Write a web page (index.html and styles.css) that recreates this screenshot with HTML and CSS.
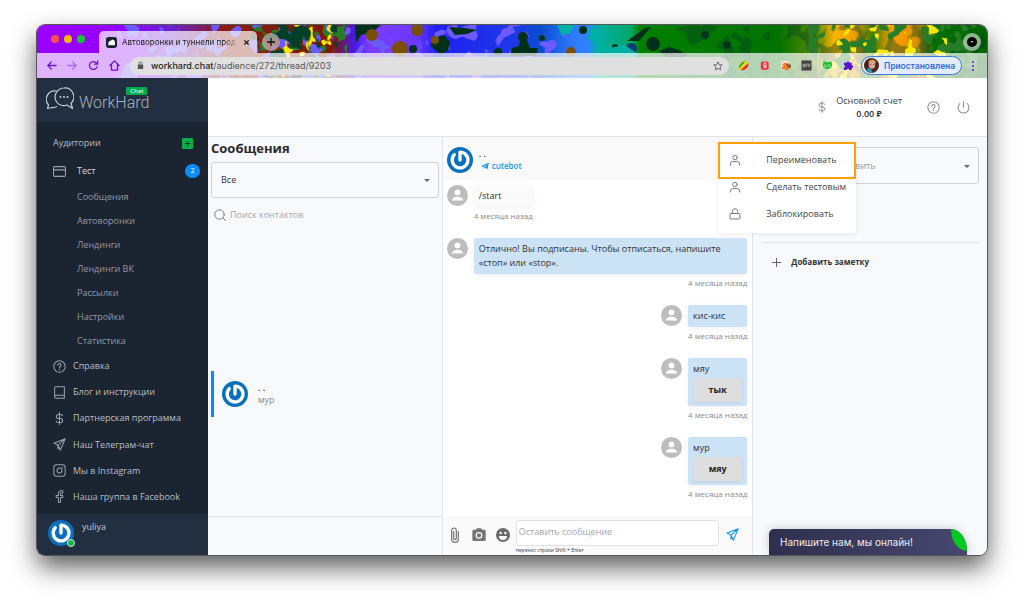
FILE: index.html
```
<!DOCTYPE html>
<html lang="ru">
<head>
<meta charset="utf-8">
<title>Автоворонки и туннели продаж</title>
<meta name="viewport" content="width=device-width, initial-scale=1">
<link rel="stylesheet" href="styles.css">
</head>
<body>
<svg class="defs" aria-hidden="true">
  <defs>
    <symbol id="i-user" viewBox="0 0 24 24"><circle cx="12" cy="7" r="4.500"/><path d="M3 22v-2a5 5 0 0 1 5-5h8a5 5 0 0 1 5 5v2"/></symbol>
    <symbol id="i-lock" viewBox="0 0 24 24"><rect x="2" y="11" width="20" height="11" rx="2"/><path d="M6.500 11V7a5.500 5.500 0 0 1 11 0v4"/></symbol>
    <symbol id="i-help" viewBox="0 0 24 24"><circle cx="12" cy="12" r="10.500"/><path d="M9 9.500a3 3 0 1 1 4.500 2.600c-1 .6-1.500 1-1.500 2.200M12 17v.8"/></symbol>
    <symbol id="i-plane" viewBox="0 0 24 24"><path d="M22.500 1.500 1.500 9.500l7.500 4 4.500 9zM9 13.500l13-12M9 13.500V20l3-3"/></symbol>
    <symbol id="i-dollar" viewBox="0 0 24 24"><path d="M12 1v22M17.500 6.500C17 5 15.500 4.500 14 4.500h-4a3.700 3.700 0 0 0 0 7.500h4a3.700 3.700 0 0 1 0 7.500h-4.500C8 19.500 6.500 19 6 17"/></symbol>
    <symbol id="i-person" viewBox="0 0 24 24"><circle cx="12" cy="12" r="12" fill="#bdbdbd"/><circle cx="12" cy="8.500" r="3.300" fill="#fff"/><path d="M5.500 17.600c0-2.700 3.400-4.200 6.500-4.200s6.500 1.500 6.500 4.200z" fill="#fff"/></symbol>
    <symbol id="i-gravatar" viewBox="0 0 26 26"><circle cx="13" cy="13" r="13" fill="#0a70bc"/><path d="M7.300 7.600A7.900 7.900 0 1 0 13 5.100v8" fill="none" stroke="#fff" stroke-width="3.300" stroke-linecap="round" stroke-linejoin="round"/><path d="M9.600 11.500a3.800 3.800 0 1 0 6.800 0" fill="none" stroke="#0a70bc" stroke-width="1.200"/></symbol>
  </defs>
</svg>

<div class="window">
  <header class="chrome">
    <svg class="chrome-art" viewBox="0 0 950 53" preserveAspectRatio="none" aria-hidden="true">
      <defs>
        <linearGradient id="sky" x1="0" x2="1">
          <stop offset="0" stop-color="#9a00ff"/><stop offset=".09" stop-color="#9400ff"/>
          <stop offset=".14" stop-color="#6a20d0"/><stop offset=".2" stop-color="#8a1c10"/>
          <stop offset=".31" stop-color="#7c1a00"/><stop offset=".335" stop-color="#4a18f0"/>
          <stop offset=".35" stop-color="#7b3cff"/><stop offset=".4" stop-color="#6b38ff"/>
          <stop offset=".42" stop-color="#2020f0"/><stop offset=".5" stop-color="#1c38e8"/>
          <stop offset=".53" stop-color="#0a4cd0"/><stop offset=".565" stop-color="#2f7bff"/>
          <stop offset=".58" stop-color="#2f80ff"/><stop offset=".59" stop-color="#00b0a4"/>
          <stop offset=".625" stop-color="#04a868"/><stop offset=".635" stop-color="#008000"/>
          <stop offset=".78" stop-color="#007200"/><stop offset=".82" stop-color="#5c8a00"/>
          <stop offset=".84" stop-color="#ffb400"/><stop offset=".86" stop-color="#f0a000"/><stop offset=".88" stop-color="#3c7c00"/>
          <stop offset=".9" stop-color="#ffa000"/><stop offset=".925" stop-color="#e09000"/><stop offset=".945" stop-color="#007000"/>
          <stop offset="1" stop-color="#006400"/>
        </linearGradient>
        <filter id="camo-a" x="0" y="0" width="1" height="1"><feTurbulence type="fractalNoise" baseFrequency=".06" numOctaves="2" seed="4"/><feColorMatrix values="0 0 0 0 0  0 0 0 0 .05  0 0 0 0 .02  18 0 0 0 -9.300"/></filter>
        <filter id="camo-b" x="0" y="0" width="1" height="1"><feTurbulence type="fractalNoise" baseFrequency=".07" numOctaves="2" seed="11"/><feColorMatrix values="0 0 0 0 .15  0 0 0 0 .1  0 0 0 0 1  0 18 0 0 -10"/></filter>
        <filter id="camo-c" x="0" y="0" width="1" height="1"><feTurbulence type="fractalNoise" baseFrequency=".09" numOctaves="2" seed="21"/><feColorMatrix values="0 0 0 0 .95  0 0 0 0 .8  0 0 0 0 0  0 0 20 0 -12.200"/></filter>
        <filter id="camo-d" x="0" y="0" width="1" height="1"><feTurbulence type="fractalNoise" baseFrequency=".07" numOctaves="2" seed="32"/><feColorMatrix values="0 0 0 0 .02  0 0 0 0 .2  0 0 0 0 .02  18 0 0 0 -9.600"/></filter>
      </defs>
      <rect width="950" height="53" fill="url(#sky)"/>
      <rect x="215" width="95" height="53" filter="url(#camo-d)"/>
      <rect x="80" width="240" height="53" filter="url(#camo-b)"/>
      <rect x="240" width="70" height="53" filter="url(#camo-c)"/>
      <rect x="215" width="85" height="53" filter="url(#camo-a)"/>
      <rect x="320" width="210" height="53" filter="url(#camo-b)"/>
      <g fill="#003018">
        <path d="M318 0h26l-8 7-12 3-5 8zM395 14l12-4 6 7-2 9-8 3-9-8zM412 2l16 1 12 2-10 4-12 1z"/>
        <circle cx="376" cy="24" r="4"/><circle cx="461" cy="27" r="4"/><circle cx="486" cy="12" r="5"/><path d="M483 15h7l3 8h8l-2 8h-26l2-8 7-2z"/>
        <circle cx="505" cy="13" r="3"/><circle cx="546" cy="5" r="4"/><circle cx="578" cy="22" r="3"/><circle cx="594" cy="24" r="6" fill="#073c78"/>
        <circle cx="616" cy="19" r="7"/><path d="M590 16l18-13 6-1-12 14zM622 26l10-4 10 3 10 6-22 2z"/><circle cx="690" cy="20" r="4"/><circle cx="668" cy="10" r="4"/>
      </g>
      <g fill="#7a5000"><circle cx="335" cy="10" r="6"/><circle cx="380" cy="5" r="6"/><circle cx="363" cy="24" r="8"/><circle cx="534" cy="27" r="5"/><circle cx="398" cy="15" r="4"/></g>
      <g fill="#00b0a4"><path d="M520 0h18l-5 8-8 3zM552 3l10 1 5 12-4 4-12-6zM566 24l22-4 14 10-20 6z"/></g>
      <rect x="640" width="310" height="53" filter="url(#camo-a)" opacity=".4"/>
      <rect x="770" width="170" height="53" filter="url(#camo-d)"/>
      <rect x="790" width="120" height="53" filter="url(#camo-c)"/>
    </svg>
    <div class="tabstrip">
      <div class="lights"><i class="red"></i><i class="amber"></i><i class="green"></i></div>
      <div class="tab">
        <svg class="ico11" viewBox="0 0 12 12"><rect width="12" height="12" rx="3" fill="#15242c"/><path d="M2.500 9V6.500l1-2 1.500-.3L7 2.800l2 .7.800 2V9z" fill="#fff"/></svg>
        <span class="tab-title">Автоворонки и туннели прод</span>
        <button class="plain" aria-label="Закрыть вкладку"><svg class="ico7" viewBox="0 0 8 8"><path d="M1.500 1.500l5 5M6.500 1.500l-5 5" stroke="#111" stroke-width="1.400"/></svg></button>
      </div>
      <button class="round-btn" aria-label="Новая вкладка"><svg class="ico10" viewBox="0 0 10 10"><path d="M5 1v8M1 5h8" stroke="#111" stroke-width="1.300"/></svg></button>
      <button class="round-btn tab-search" aria-label="Поиск вкладок"><svg class="ico10" viewBox="0 0 10 10"><circle cx="5" cy="5" r="5"/><path d="M3.500 4h3L5 6z" fill="#ccc"/></svg></button>
    </div>
    <div class="toolbar">
      <div class="nav-btns">
        <button class="plain" aria-label="Назад"><svg class="ico11 line" viewBox="0 0 12 12"><path d="M11 6H2M6 2 2 6l4 4"/></svg></button>
        <button class="plain dim" aria-label="Вперёд"><svg class="ico11 line" viewBox="0 0 12 12"><path d="M1 6h9M6 2l4 4-4 4"/></svg></button>
        <button class="plain" aria-label="Обновить"><svg class="ico11 line" viewBox="0 0 12 12"><path d="M10 7.200A4.300 4.300 0 1 1 9.300 3.400M10.500 1v3.600H7"/></svg></button>
        <button class="plain" aria-label="Домой"><svg class="ico11 line" viewBox="0 0 12 12"><path d="M1 6l5-5 5 5M2.700 5v6h6.600V5"/></svg></button>
      </div>
      <div class="address">
        <svg class="ico9" viewBox="0 0 10 10"><rect x="2" y="4" width="6" height="5" rx=".6" fill="#555"/><path d="M3.300 4V2.800a1.700 1.700 0 0 1 3.400 0V4" fill="none" stroke="#555"/></svg>
        <span class="url"><b>workhard.chat</b>/audience/272/thread/9203</span>
        <svg class="ico10 star" viewBox="0 0 12 12"><path d="M6 1l1.500 3.400 3.600.3-2.700 2.400.8 3.600L6 8.800l-3.200 1.900.8-3.600L.9 4.700l3.600-.3z"/></svg>
      </div>
      <div class="exts">
        <svg class="ico11" viewBox="0 0 12 12"><ellipse cx="6" cy="6" rx="6" ry="4.500" transform="rotate(-45 6 6)" fill="#fbd21c"/><path d="M1.200 9.500C.5 6 4 1.500 8 1.300z" fill="#18a84c"/><path d="M3 10.800C7 12.300 12 8 11 3.500z" fill="#e3262d"/></svg>
        <svg class="ico11" viewBox="0 0 12 12"><rect x="2" y="1.500" width="8.500" height="9" rx="2" fill="#f02c3c"/><path d="M7.500 9V3.300H6.200a1.500 1.500 0 0 0 0 3h1.300M6.500 6.300 5 9" stroke="#fff" fill="none"/></svg>
        <svg class="ico11" viewBox="0 0 12 12"><path d="M1 1h7l3 3v7H1z" fill="#f4eee8"/><path d="M2 2h1v1H2zM4 3h2v1H4zM2 5h2v1H2zM2 8h2v2H2z" fill="#e04020"/><circle cx="7.500" cy="7" r="4" fill="#e8842c"/><path d="M7.500 7l4-2.500v4z" fill="#444"/><circle cx="8" cy="5" r=".7"/></svg>
        <svg class="ico11" viewBox="0 0 12 12"><rect x=".5" y=".5" width="11" height="11" fill="#444"/><path d="M2.300 4.500h1.600v3H2.300zM5.500 7.800V4.500h1.700M5.500 6.200h1.500M8.500 7.800V4.500h1.700M8.500 6.200H10" stroke="#eee" stroke-width=".6" fill="none"/></svg>
        <svg class="ico11" viewBox="0 0 12 12"><path d="M2 1l2 1.500h4L10 1l.8 3A5 4.500 0 1 1 1.200 4z" fill="#12c02c"/><path d="M2.500 4.500h7v3h-7z" fill="#7ef08c"/><path d="M4 5.200h1.400v1.500H4zM6.600 6.700V5.200L8 6.700V5.200" fill="none" stroke="#0a7a1c" stroke-width=".5"/></svg>
        <svg class="ico11" viewBox="0 0 12 12"><path d="M1 3h3a1.500 1.500 0 1 1 3 0h2.500v2.800a1.500 1.500 0 1 1 0 3V11H6.800a1.400 1.400 0 0 0-2.800 0H1V8.300a1.400 1.400 0 0 0 0-2.800z" fill="#5b10d8"/></svg>
      </div>
      <button class="profile">
        <svg class="ico15" viewBox="0 0 16 16"><circle cx="8" cy="8" r="8" fill="#4a2418"/><ellipse cx="8.500" cy="7" rx="3.500" ry="4.500" fill="#dcaa98"/><path d="M4.500 4.500c1.500-4 7-4 8.500 0l-1 .5c-2-1.500-4-1.500-6 0z" fill="#c8a060"/><path d="M2.500 12.500c2-3 4-2 5.500 0l1 3.500a8 8 0 0 1-6.500-3.500z" fill="#1aa0b8"/><path d="M6 6.800h2M9.500 6.800h2" stroke="#7a4a50" stroke-width=".8"/></svg>
        <span>Приостановлена</span>
      </button>
      <button class="plain kebab" aria-label="Меню"><i></i><i></i><i></i></button>
    </div>
  </header>

  <div class="app">
    <aside class="sidebar">
      <a class="brand" href="#">
        <svg class="brand-mark" viewBox="0 0 28 23"><path d="M11 19.500A8 8 0 0 1 6 20.500L1.500 21.500l1-3.500A8.500 8.500 0 0 1 10.500 4"/><path d="M18 1a9 9 0 0 0-7 14.500c1.800 2.400 6 4 10 2.500L26.500 21.500 25 16.500A9 9 0 0 0 18 1z"/><g class="dots"><circle cx="14.500" cy="10" r="1"/><circle cx="18" cy="10" r="1"/><circle cx="21.500" cy="10" r="1"/></g></svg>
        <span class="brand-name">WorkHard<span class="brand-badge">Chat</span></span>
      </a>
      <nav class="nav">
        <div class="nav-head"><span>Аудитории</span><button class="add" aria-label="Добавить аудиторию"><svg class="ico7" viewBox="0 0 8 8"><path d="M4 1v6M1 4h6" stroke="#12301c" stroke-width="1.400"/></svg></button></div>
        <a class="nav-head current" href="#"><svg class="ico13 line" viewBox="0 0 24 24"><rect x="1" y="3" width="22" height="18" rx="2"/><path d="M1 9h22"/></svg><span class="grow">Тест</span><span class="count">2</span></a>
        <ul class="sub">
          <li><a href="#">Сообщения</a></li><li><a href="#">Автоворонки</a></li><li><a href="#">Лендинги</a></li><li><a href="#">Лендинги ВК</a></li><li><a href="#">Рассылки</a></li><li><a href="#">Настройки</a></li><li><a href="#">Статистика</a></li>
        </ul>
        <ul class="links">
          <li><a href="#"><svg class="ico13 line"><use href="#i-help"/></svg>Справка</a></li>
          <li><a href="#"><svg class="ico13 line" viewBox="0 0 24 24"><path d="M21 17V1.500H5.500A2.500 2.500 0 0 0 3 4v16a2.500 2.500 0 0 0 2.500 2.500H21V17H5.500A2.500 2.500 0 0 0 3 19.500"/></svg>Блог и инструкции</a></li>
          <li><a href="#"><svg class="ico13 line"><use href="#i-dollar"/></svg>Партнерская программа</a></li>
          <li><a href="#"><svg class="ico13 line"><use href="#i-plane"/></svg>Наш Телеграм-чат</a></li>
          <li><a href="#"><svg class="ico13 line" viewBox="0 0 24 24"><rect x="1.500" y="1.500" width="21" height="21" rx="5"/><circle cx="12" cy="12" r="4.500"/><path d="M17.500 6v1"/></svg>Мы в Instagram</a></li>
          <li><a href="#"><svg class="ico13 line" viewBox="0 0 24 24"><path d="M18 1.500h-3a5 5 0 0 0-5 5V10H6v4h4v8.500h4V14h4V10h-4V7a1.500 1.500 0 0 1 1.500-1.500H18z"/></svg>Наша группа в Facebook</a></li>
        </ul>
      </nav>
      <div class="me"><span class="me-pic"><svg class="ico26"><use href="#i-gravatar"/></svg><i class="online"></i></span><span>yuliya</span></div>
    </aside>

    <div class="main">
      <div class="topbar">
        <svg class="ico12 line"><use href="#i-dollar"/></svg>
        <div class="balance"><span>Основной счет</span><b>0.00 ₽</b></div>
        <button class="plain" aria-label="Помощь"><svg class="ico13 line"><use href="#i-help"/></svg></button>
        <button class="plain" aria-label="Выйти"><svg class="ico13 line" viewBox="0 0 24 24"><path d="M12 1v11M18.500 4.500a10 10 0 1 1-13 0"/></svg></button>
      </div>

      <div class="columns">
        <section class="inbox">
          <h1>Сообщения</h1>
          <div class="select"><select aria-label="Фильтр сообщений"><option>Все</option></select></div>
          <label class="search"><svg class="ico12 line" viewBox="0 0 24 24"><circle cx="11" cy="11" r="9.500"/><path d="M18 18l5 5"/></svg><input type="text" placeholder="Поиск контактов"></label>
          <div class="contacts">
            <a class="contact" href="#"><svg class="ico26"><use href="#i-gravatar"/></svg><span class="contact-text"><b>. .</b><span>мур</span></span></a>
          </div>
          <div class="inbox-foot"></div>
        </section>

        <section class="chat">
          <header class="chat-head">
            <svg class="ico26"><use href="#i-gravatar"/></svg>
            <div class="peer"><b>. .</b><a href="#"><svg class="ico8" viewBox="0 0 10 10"><path d="M9.800.8 8.200 9 5 7 3.500 8.800 3 6.200 0 5z" fill="#1795ec"/><path d="M3 6.200 8.500 2 4.500 6.700z" fill="#fff"/></svg>cutebot</a></div>
            <div class="menu">
              <button class="marked"><svg class="ico12 line"><use href="#i-user"/></svg>Переименовать</button>
              <button><svg class="ico12 line"><use href="#i-user"/></svg>Сделать тестовым</button>
              <button><svg class="ico12 line"><use href="#i-lock"/></svg>Заблокировать</button>
            </div>
          </header>
          <div class="thread">
            <article class="msg in"><svg class="ico21"><use href="#i-person"/></svg><div class="msg-body"><div class="bubble">/start</div><time>4 месяца назад</time></div></article>
            <article class="msg wide"><svg class="ico21"><use href="#i-person"/></svg><div class="msg-body"><div class="bubble">Отлично! Вы подписаны. Чтобы отписаться, напишите «стоп» или «stop».</div><time>4 месяца назад</time></div></article>
            <article class="msg"><svg class="ico21"><use href="#i-person"/></svg><div class="msg-body"><div class="bubble">кис-кис</div><time>4 месяца назад</time></div></article>
            <article class="msg"><svg class="ico21"><use href="#i-person"/></svg><div class="msg-body"><div class="bubble">мяу<button>тык</button></div><time>4 месяца назад</time></div></article>
            <article class="msg"><svg class="ico21"><use href="#i-person"/></svg><div class="msg-body"><div class="bubble">мур<button>мяу</button></div><time>4 месяца назад</time></div></article>
          </div>
          <footer class="composer">
            <button class="plain" aria-label="Файл"><svg class="ico16" viewBox="0 0 24 24"><path d="M17 6v12a5 5 0 0 1-10 0V5a3.500 3.500 0 0 1 7 0v12a2 2 0 0 1-4 0V6" fill="none" stroke="#757575" stroke-width="1.800"/></svg></button>
            <button class="plain" aria-label="Фото"><svg class="ico16" viewBox="0 0 24 24"><path d="M9 2 7.200 4H4a2 2 0 0 0-2 2v13a2 2 0 0 0 2 2h16a2 2 0 0 0 2-2V6a2 2 0 0 0-2-2h-3.200L15 2z" fill="#757575"/><circle cx="12" cy="12.500" r="4.200" fill="#757575" stroke="#fff" stroke-width="1.800"/></svg></button>
            <button class="plain" aria-label="Эмодзи"><svg class="ico16" viewBox="0 0 24 24"><circle cx="12" cy="12" r="10.500" fill="#6a6a6a"/><circle cx="8.500" cy="9" r="1.800" fill="#fff"/><circle cx="15.500" cy="9" r="1.800" fill="#fff"/><path d="M6 13.500h12a6 6 0 0 1-12 0z" fill="#fff"/></svg></button>
            <div class="compose-box"><textarea rows="1" aria-label="Сообщение" placeholder="Оставить сообщение"></textarea><small>перенос строки Shift + Enter</small></div>
            <button class="plain send" aria-label="Отправить"><svg class="ico13 line"><use href="#i-plane"/></svg></button>
          </footer>
        </section>

        <section class="details">
          <div class="select"><select class="tag-select" aria-label="Метка"><option>Добавить</option></select></div>
          <hr>
          <button class="add-note"><svg class="ico9 thin" viewBox="0 0 10 10"><path d="M5 0v10M0 5h10"/></svg>Добавить заметку</button>
          <button class="support">Напишите нам, мы онлайн!</button>
        </section>
      </div>
    </div>
  </div>
</div>
</body>
</html>
```

FILE: styles.css
```
* { box-sizing: border-box; }
body {
  margin: 0;
  min-height: 100vh;
  padding: 25px 37px 49px 37px;
  display: flex;
  background: #fff;
  color: #333;
  font: 9px/14px "Open Sans", "Noto Sans", sans-serif;
}
button, input, select, textarea { font: inherit; color: inherit; }
button { padding: 0; border: 0; background: none; }
a { color: inherit; text-decoration: none; }
ul { margin: 0; padding: 0; list-style: none; }
svg { display: block; flex: none; }
.defs { position: absolute; width: 0; height: 0; }
.line { fill: none; stroke: currentColor; stroke-width: 1.9; stroke-linecap: round; stroke-linejoin: round; }
.thin { fill: none; stroke: #555; stroke-width: 1; }
.ico7 { width: 7px; height: 7px; }
.ico8 { width: 8px; height: 8px; }
.ico9 { width: 9px; height: 9px; }
.ico10 { width: 10px; height: 10px; }
.ico11 { width: 11px; height: 11px; }
.ico12 { width: 12px; height: 12px; }
.ico13 { width: 13px; height: 13px; }
.ico15 { width: 15px; height: 15px; }
.ico16 { width: 16px; height: 16px; }
.ico21 { width: 21px; height: 21px; }
.ico26 { width: 26px; height: 26px; }

.window {
  flex: 1;
  display: flex;
  flex-direction: column;
  border-radius: 8px;
  overflow: hidden;
  box-shadow: 0 0 0 1px #55565a, 0 12px 26px rgba(0, 0, 0, .65);
}

/* browser chrome */
.chrome { position: relative; font-family: Inter, Roboto, sans-serif; }
.chrome-art { position: absolute; inset: 0; width: 100%; height: 100%; }
.tabstrip { position: relative; height: 28px; padding: 0 6px 0 14px; display: flex; align-items: center; }
.lights { display: flex; gap: 5px; width: 48px; }
.lights i { width: 8px; height: 8px; border-radius: 50%; }
.red { background: #ff4f4a; }
.amber { background: #fdb900; }
.green { background: #14c832; }
.tab {
  align-self: flex-end;
  width: 158px;
  height: 22px;
  padding: 0 7px;
  display: flex;
  align-items: center;
  gap: 5px;
  border-radius: 5px 5px 0 0;
  background: rgba(255, 255, 255, .7);
  color: #222;
  font-size: 8px;
}
.tab-title { flex: 1; white-space: nowrap; -webkit-mask-image: linear-gradient(90deg, #000 88%, transparent); mask-image: linear-gradient(90deg, #000 88%, transparent); }
.round-btn { width: 18px; height: 18px; margin: 6px 0 0 5px; display: grid; place-items: center; border-radius: 50%; background: rgba(190, 180, 175, .75); }
.tab-search { margin-left: auto; background: rgba(200, 215, 200, .7); }
.toolbar { position: relative; height: 25px; padding: 0 13px 0 9px; display: flex; align-items: center; background: rgba(255, 255, 255, .7); }
.nav-btns { display: flex; gap: 10px; color: #6a14d8; }
.nav-btns .line { stroke-width: 1.4; }
.plain { display: grid; place-items: center; }
.dim { opacity: .45; }
.address { flex: 1; height: 18px; margin: 0 9px 0 10px; padding: 0 6px; display: flex; align-items: center; gap: 6px; border-radius: 9px; background: #e0e0e0; color: #555; }
.url { flex: 1; }
.url b { font-weight: 500; color: #222; }
.star { fill: none; stroke: #555; }
.exts { display: flex; gap: 10px; }
.profile { height: 19px; margin-left: 7px; padding: 0 6px 0 2px; display: flex; align-items: center; gap: 5px; border: 1px solid #3b78e0; border-radius: 10px; background: #e2ecfa; color: #2a6be0; font: 500 9px/14px Roboto, sans-serif; }
.kebab { margin-left: 10px; gap: 2px; }
.kebab i { width: 2px; height: 2px; background: #6a14d8; border-radius: 50%; }

/* app shell */
.app { flex: 1; display: flex; background: #f7f9fd; }
.sidebar { width: 171px; display: flex; flex-direction: column; background: #1b2431; color: #b9bfc7; }
.brand { height: 44px; padding: 9px 9px 0; display: flex; gap: 5px; background: #222f40; }
.brand-mark { width: 28px; height: 23px; fill: none; stroke: #c6cdd4; stroke-width: 1.2; stroke-linejoin: round; }
.dots { fill: #c6cdd4; stroke: none; }
.brand-name { position: relative; padding-top: 6px; font: 300 16px/20px Roboto, sans-serif; color: #a9b2bc; }
.brand-badge { position: absolute; right: 2px; top: 0; padding: 0 4px; border-radius: 1px; background: #00ac4e; color: #fff; font: 400 6px/8px "Noto Sans", sans-serif; }
.nav { flex: 1; padding: 7px 0 4px; display: flex; flex-direction: column; }
.nav-head { height: 28px; padding: 0 15px 0 16px; display: flex; align-items: center; justify-content: space-between; }
.current { padding-right: 8px; gap: 11px; color: #d5d9de; }
.grow { flex: 1; }
.nav svg { color: #98a0aa; }
.add { width: 11px; height: 11px; display: grid; place-items: center; border-radius: 1px; background: #06ae4a; }
.count { width: 15px; border-radius: 7px; background: #0a8cff; color: #fff; text-align: center; font-size: 7px; }
.sub { color: #929aa5; }
.sub a { height: 24px; padding-left: 40px; display: flex; align-items: center; }
.links { flex: 1; display: flex; flex-direction: column; }
.links li { flex: 1; display: flex; }
.links a { padding-left: 16px; display: flex; align-items: center; gap: 7px; white-space: nowrap; }
.me { height: 41px; padding: 6px 11px; display: flex; gap: 8px; background: #222f40; color: #c2c8cf; }
.me-pic { position: relative; }
.online { position: absolute; right: -1px; bottom: 2px; width: 8px; height: 8px; border: 1px solid #d8e8dc; border-radius: 50%; background: #0ab848; }

.main { flex: 1; min-width: 0; display: flex; flex-direction: column; }
.topbar { height: 59px; padding: 0 17px; display: flex; align-items: center; justify-content: flex-end; gap: 17px; border-bottom: 1px solid #e2e4ea; background: #fff; color: #909090; }
.balance { margin: -1px 8px 0 -9px; display: flex; flex-direction: column; align-items: center; line-height: 13px; color: #444; }
.balance b { font-weight: 600; color: #333; }
.columns { flex: 1; display: grid; grid-template-columns: 3fr 4fr 3fr; }

/* contacts column */
.inbox { padding: 3px 3px 0; display: flex; flex-direction: column; }
.inbox h1 { margin: 0 0 6px; font-size: 13px; line-height: 16px; font-weight: 700; color: #2b2b2b; }
.select { position: relative; }
.select::after { content: ""; position: absolute; right: 9px; top: 50%; margin-top: -1px; border: 3px solid transparent; border-top-color: #666; }
.select select { width: 100%; height: 36px; padding: 0 9px; appearance: none; border: 1px solid #cfd2d8; border-radius: 3px; background: #f9fafd; }
.search { height: 33px; padding-left: 3px; display: flex; align-items: center; gap: 4px; color: #777; }
.search input { flex: 1; min-width: 0; padding: 0; border: 0; background: none; }
::placeholder { color: #a6a8ac; opacity: 1; }
.contacts { flex: 1; display: flex; flex-direction: column; justify-content: center; }
.contact { height: 46px; margin-top: 40px; padding-left: 8px; display: flex; align-items: center; gap: 10px; border-left: 3px solid #0a8cff; }
.contact-text { display: flex; flex-direction: column; line-height: 12px; color: #8a8a8a; }
.contact-text b, .peer b { font-weight: 600; color: #333; }
.inbox-foot { height: 39px; margin: 0 -3px; border-top: 1px solid #e2e4ea; }

/* conversation column */
.chat { display: flex; flex-direction: column; border: 1px solid #e2e5ec; border-width: 0 1px; background: #fff; }
.chat-head { position: relative; height: 43px; padding: 3px 4px 0; display: flex; align-items: center; gap: 6px; background: #fafafa; }
.peer { display: flex; flex-direction: column; line-height: 12px; }
.peer a { display: flex; align-items: center; gap: 3px; padding-left: 2px; color: #1795ec; font-size: 8px; font-weight: 600; }
.menu { position: absolute; z-index: 2; right: -104px; top: 5px; width: 138px; padding-bottom: 6px; display: flex; flex-direction: column; background: #fff; box-shadow: 0 1px 5px rgba(0, 0, 0, .08); }
.menu button { height: 27px; padding-left: 11px; display: flex; align-items: center; gap: 25px; white-space: nowrap; color: #444; }
.menu .line { color: #777; }
.menu .marked { height: 37px; padding: 0 0 1px 9px; border: 2px solid #ff9f0a; }
.menu .marked + button { margin-top: -6px; }
.thread { flex: 1; padding: 5px 5px 12px 4px; display: flex; flex-direction: column; gap: 13px; }
.msg { display: flex; align-items: flex-start; justify-content: flex-end; gap: 6px; }
.msg.in { justify-content: flex-start; }
.msg-body { display: flex; flex-direction: column; }
.bubble { padding: 4px 5px; border-radius: 2px; background: #cce2f5; color: #333; line-height: 14px; box-shadow: 0 1px 6px rgba(0, 0, 0, .06); }
.msg.wide .msg-body { flex: 1; }
.msg.in .bubble { background: #fafafa; }
.msg time { font-size: 8px; line-height: 18px; color: #8a8a8a; text-align: right; }
.bubble button { display: block; width: 100%; height: 24px; margin-top: 2px; border-radius: 2px; background: #dedede; color: #222; font-weight: 700; box-shadow: 0 1px 3px rgba(0, 0, 0, .08); }
.composer { height: 39px; padding: 4px 13px 0 4px; display: flex; align-items: flex-start; gap: 8px; background: #fafafa; }
.composer > .plain { height: 29px; }
.compose-box { flex: 1; margin: 0 -1px 0 -3px; display: flex; flex-direction: column; }
.compose-box textarea { width: 100%; height: 26px; padding: 4px 2px; resize: none; border: 1px solid #e2e2e2; border-radius: 3px; background: #fff; }
.compose-box small { font-size: 5px; line-height: 8px; color: #333; }
.composer .send { color: #1b95f2; }
.composer .send .line { stroke-width: 2; }

/* details column */
.details { position: relative; padding: 10px 8px; display: flex; flex-direction: column; }
.details .tag-select { height: 37px; padding-left: 71px; color: #999; }
.details hr { width: 100%; margin: 58px 0 0; border: 0; border-top: 1px solid #e2e4ea; }
.add-note { align-self: flex-start; margin: 12px 0 0 11px; display: flex; align-items: center; gap: 10px; color: #333; font-weight: 700; font-size: 8px; }
.support {
  position: absolute;
  right: 20px;
  bottom: 0;
  width: 198px;
  height: 26px;
  padding-left: 11px;
  text-align: left;
  border-radius: 5px 16px 0 0 / 5px 22px 0 0;
  background: linear-gradient(90deg, #2f2f4d, #46476f);
  box-shadow: 0 0 10px rgba(0, 0, 0, .2);
  color: #eee;
  font: 10px/14px Inter, Roboto, sans-serif;
}
.support::after { content: ""; position: absolute; right: 0; top: 0; width: 16px; height: 22px; border-radius: 0 100% 0 100%; background: #00c81e; }
```
